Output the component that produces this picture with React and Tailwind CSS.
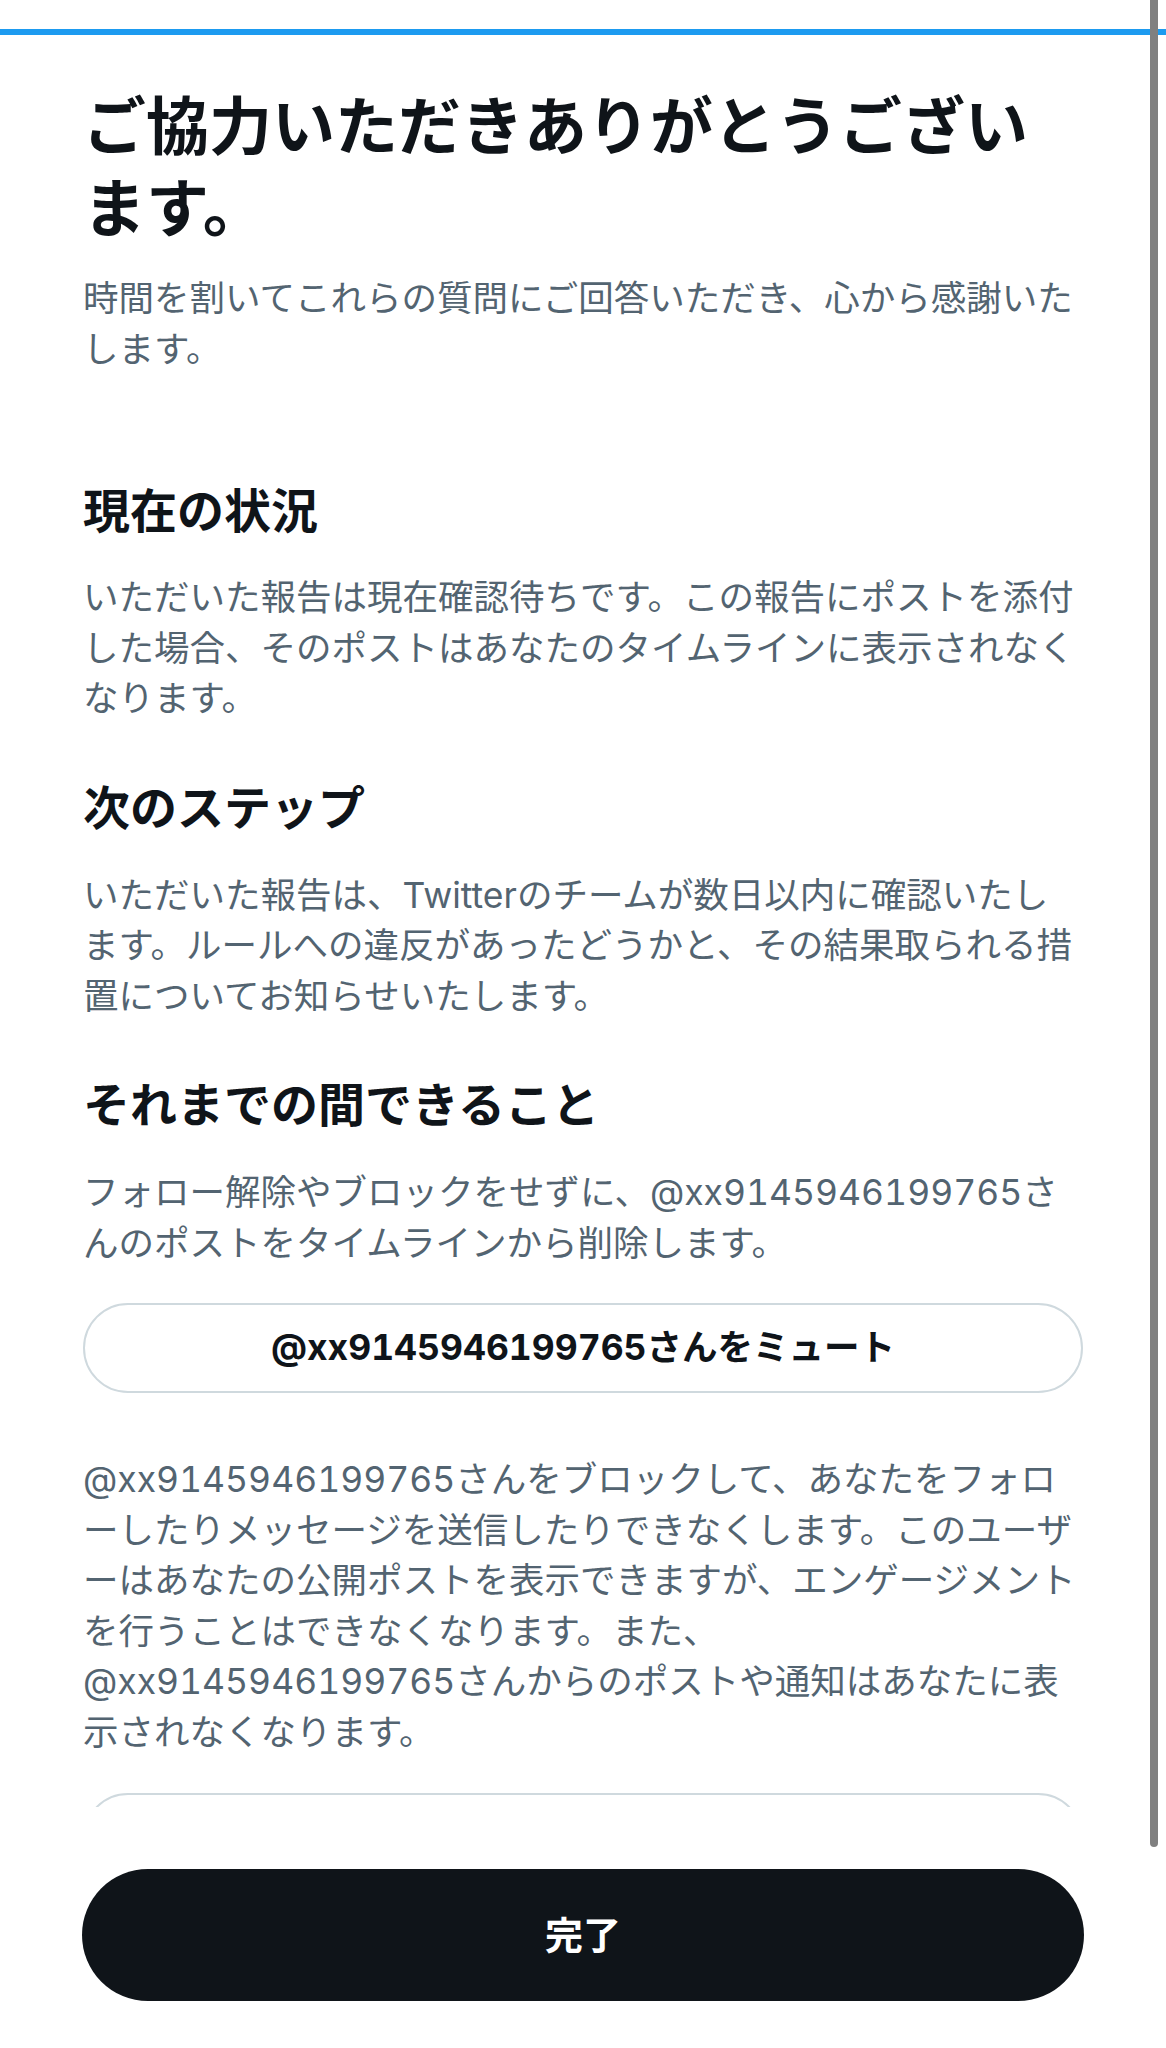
const FONT = {
  fontFamily: 'Inter, "Noto Sans CJK JP", sans-serif',
  fontVariantNumeric: 'tabular-nums',
};

function Section({ title, children, first }) {
  return (
    <div className={first ? 'mt-[108px]' : 'mt-[55px]'}>
      <h2 className="text-[47px] leading-[56px] font-bold text-[#0f1419]">{title}</h2>
      <p className={`${first ? 'mt-[34px]' : 'mt-[35px]'} text-[35.5px] leading-[50.5px] text-[#536471]`}>{children}</p>
    </div>
  );
}

const OutlineButton = ({ label }) => (
  <div className="h-[90px] rounded-full border-2 border-[#cfd9de] flex items-center justify-center text-[35.5px] font-bold text-[#0f1419]">
    {label}
  </div>
);

export default function App() {
  const user = '@xx9145946199765';

  return (
    <div lang="ja" style={FONT} className="relative flex flex-col h-[2048px] bg-white overflow-hidden [line-break:normal]">
      {/* progress */}
      <div className="h-[29px] shrink-0" />
      <div className="h-[6px] shrink-0 bg-[#1d9bf0]" />

      {/* scroll area */}
      <div className="flex-1 overflow-hidden px-[83px]">
        <h1 className="mt-[50px] text-[63px] leading-[82px] font-bold text-[#0f1419]">
          ご協力いただきありがとうございます。
        </h1>
        <p className="mt-[25px] text-[35.5px] leading-[50.5px] text-[#536471]">
          時間を割いてこれらの質問にご回答いただき、心から感謝いたします。
        </p>

        <Section title="現在の状況" first>
          いただいた報告は現在確認待ちです。この報告にポストを添付した場合、そのポストはあなたのタイムラインに表示されなくなります。
        </Section>

        <Section title="次のステップ">
          いただいた報告は、Twitterのチームが数日以内に確認いたします。ルールへの違反があったどうかと、その結果取られる措置についてお知らせいたします。
        </Section>

        <Section title="それまでの間できること">
          フォロー解除やブロックをせずに、{user}さんのポストをタイムラインから削除します。
        </Section>

        <div className="mt-[34px]">
          <OutlineButton label={`${user}さんをミュート`} />
        </div>

        <p className="mt-[62px] text-[35.5px] leading-[50.5px] text-[#536471]">
          {user}さんをブロックして、あなたをフォローしたりメッセージを送信したりできなくします。このユーザーはあなたの公開ポストを表示できますが、エンゲージメントを行うことはできなくなります。また、{user}さんからのポストや通知はあなたに表示されなくなります。
        </p>

        <div className="mt-[35px]">
          <OutlineButton label={`${user}さんをブロック`} />
        </div>
      </div>

      {/* footer */}
      <div className="h-[241px] shrink-0 px-[82px] pt-[62px]">
        <button className="w-full h-[132px] rounded-full bg-[#0f1419] text-white text-[38px] font-bold">
          完了
        </button>
      </div>

      {/* scrollbar thumb */}
      <div className="absolute top-0 right-[8px] w-[8px] h-[1847px] bg-[#808080] rounded-b-full" />
    </div>
  );
}
